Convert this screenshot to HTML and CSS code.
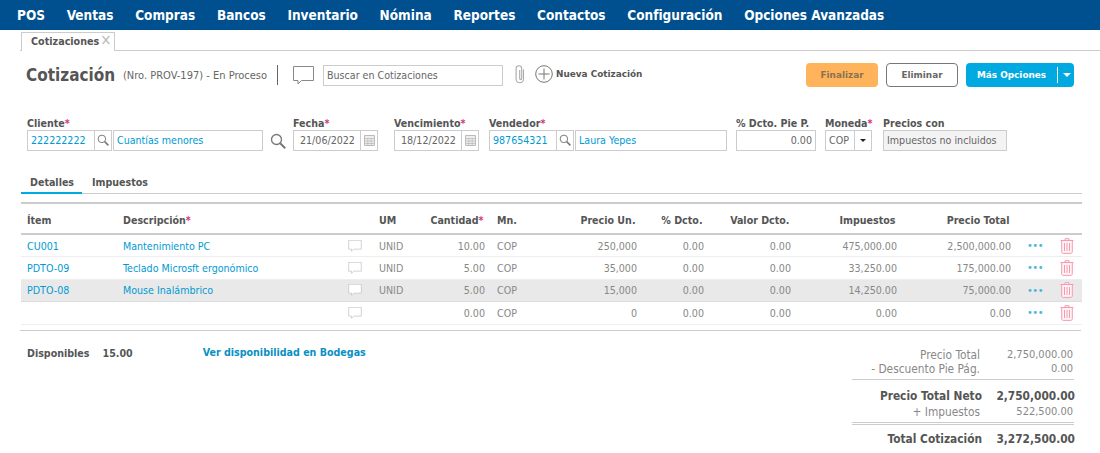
FILE: index.html
```html
<!DOCTYPE html>
<html lang="es">
<head>
<meta charset="utf-8">
<title>Cotización</title>
<link rel="stylesheet" href="styles.css">
</head>
<body>
<svg class="defs" width="0" height="0" aria-hidden="true">
  <symbol id="bubble" viewBox="0 0 21 19"><path d="M.5.5h20v14H8.500l-3.500 3.500v-3.500H.5z" fill="#fff" stroke="currentColor"/></symbol>
  <symbol id="lens" viewBox="0 0 16 16"><circle cx="6.500" cy="6.500" r="5" fill="none" stroke="currentColor" stroke-width="1.300"/><path d="M10.200 10.200l5 5" stroke="currentColor" stroke-width="2"/></symbol>
  <symbol id="cal" viewBox="0 0 11 11"><path d="M.5.5h10v10H.5z" fill="#eee" stroke="currentColor"/><path d="M.5 3.500h10M.5 6h10M.5 8.500h10M3.800 3.500v7M7.200 3.500v7" stroke="currentColor" stroke-width=".8"/></symbol>
  <symbol id="trash" viewBox="0 0 14 16"><path d="M5 2V.7h4V2M.5 2.500h13M1.700 3v10.800c0 .8.6 1.600 1.500 1.600h7.600c.9 0 1.500-.8 1.500-1.600V3M4.500 5v8M7 5v8M9.500 5v8" fill="#fff3f5" stroke="currentColor"/></symbol>
</svg>

<nav class="topnav">
  <a>POS</a><a>Ventas</a><a>Compras</a><a>Bancos</a><a>Inventario</a><a>Nómina</a><a>Reportes</a><a>Contactos</a><a>Configuración</a><a>Opciones Avanzadas</a>
</nav>

<div class="tabstrip">
  <div class="doc-tab">Cotizaciones<span class="close">×</span></div>
</div>

<header class="head">
  <h1>Cotización</h1>
  <span class="sub">(Nro. PROV-197) - En Proceso</span>
  <span class="vdiv"></span>
  <svg class="head-bubble"><use href="#bubble"/></svg>
  <div class="input search">Buscar en Cotizaciones</div>
  <svg class="clip" viewBox="0 0 12 19"><path d="M9.500 4.500v9.500a3.700 3.700 0 0 1-7.400 0V3.500a2.800 2.800 0 0 1 5.600 0v10a1 1 0 0 1-2 0V5" fill="none" stroke="#aaa" stroke-width="1.100"/></svg>
  <svg class="plus" viewBox="0 0 18 18"><circle cx="9" cy="9" r="8.300" fill="none" stroke="#777"/><path d="M9 3.500v11M3.500 9h11" stroke="#777"/></svg>
  <span class="new">Nueva Cotización</span>
  <div class="actions">
    <button class="btn orange">Finalizar</button>
    <button class="btn white">Eliminar</button>
    <button class="btn blue"><span>Más Opciones</span><i class="sep"></i><i class="caret"></i></button>
  </div>
</header>

<section class="form">
  <div class="field f-client">
    <label>Cliente<em>*</em></label>
    <div class="ctrls">
      <div class="input code link">222222222<span class="addon"><svg class="mini"><use href="#lens"/></svg></span></div>
      <div class="input name link">Cuantías menores</div>
      <svg class="big-lens"><use href="#lens"/></svg>
    </div>
  </div>
  <div class="field f-date">
    <label>Fecha<em>*</em></label>
    <div class="input date">21/06/2022<span class="addon"><svg class="calico"><use href="#cal"/></svg></span></div>
  </div>
  <div class="field f-date2">
    <label>Vencimiento<em>*</em></label>
    <div class="input date">18/12/2022<span class="addon"><svg class="calico"><use href="#cal"/></svg></span></div>
  </div>
  <div class="field f-seller">
    <label>Vendedor<em>*</em></label>
    <div class="ctrls">
      <div class="input code link">987654321<span class="addon"><svg class="mini"><use href="#lens"/></svg></span></div>
      <div class="input name2 link">Laura Yepes</div>
    </div>
  </div>
  <div class="field f-dcto">
    <label>% Dcto. Pie P.</label>
    <div class="input num">0.00</div>
  </div>
  <div class="field f-cur">
    <label>Moneda<em>*</em></label>
    <div class="input cur">COP<span class="addon"><i class="caret dark"></i></span></div>
  </div>
  <div class="field f-price">
    <label>Precios con</label>
    <div class="input ro">Impuestos no incluidos</div>
  </div>
</section>

<div class="subtabs">
  <a class="on">Detalles</a><a>Impuestos</a>
</div>

<table class="grid">
  <colgroup>
    <col class="c1"><col class="c2"><col class="c3"><col class="c4"><col class="c5"><col class="c6"><col class="c7"><col class="c8"><col class="c9"><col class="c10"><col class="c11"><col class="c12"><col class="c13">
  </colgroup>
  <thead>
    <tr>
      <th>Ítem</th><th>Descripción<em>*</em></th><th></th><th>UM</th><th class="r">Cantidad<em>*</em></th><th>Mn.</th><th class="r">Precio Un.</th><th class="r">% Dcto.</th><th class="r">Valor Dcto.</th><th class="r">Impuestos</th><th class="r">Precio Total</th><th></th><th></th>
    </tr>
  </thead>
  <tbody>
    <tr>
      <td class="link">CU001</td><td class="link">Mantenimiento PC</td><td class="ic"><svg class="row-bubble"><use href="#bubble"/></svg></td><td>UNID</td><td class="r">10.00</td><td>COP</td><td class="r">250,000</td><td class="r">0.00</td><td class="r">0.00</td><td class="r">475,000.00</td><td class="r">2,500,000.00</td><td class="dots">•••</td><td class="ic"><svg class="row-trash"><use href="#trash"/></svg></td>
    </tr>
    <tr>
      <td class="link">PDTO-09</td><td class="link">Teclado Microsft ergonómico</td><td class="ic"><svg class="row-bubble"><use href="#bubble"/></svg></td><td>UNID</td><td class="r">5.00</td><td>COP</td><td class="r">35,000</td><td class="r">0.00</td><td class="r">0.00</td><td class="r">33,250.00</td><td class="r">175,000.00</td><td class="dots">•••</td><td class="ic"><svg class="row-trash"><use href="#trash"/></svg></td>
    </tr>
    <tr class="sel">
      <td class="link">PDTO-08</td><td class="link">Mouse Inalámbrico</td><td class="ic"><svg class="row-bubble"><use href="#bubble"/></svg></td><td>UNID</td><td class="r">5.00</td><td>COP</td><td class="r">15,000</td><td class="r">0.00</td><td class="r">0.00</td><td class="r">14,250.00</td><td class="r">75,000.00</td><td class="dots">•••</td><td class="ic"><svg class="row-trash"><use href="#trash"/></svg></td>
    </tr>
    <tr>
      <td></td><td></td><td class="ic"><svg class="row-bubble"><use href="#bubble"/></svg></td><td></td><td class="r">0.00</td><td>COP</td><td class="r">0</td><td class="r">0.00</td><td class="r">0.00</td><td class="r">0.00</td><td class="r">0.00</td><td class="dots">•••</td><td class="ic"><svg class="row-trash"><use href="#trash"/></svg></td>
    </tr>
  </tbody>
</table>

<div class="rule"></div>

<section class="bottom">
  <div class="avail">
    <strong>Disponibles</strong><strong class="qty">15.00</strong>
    <a class="bodegas">Ver disponibilidad en Bodegas</a>
  </div>
  <div class="totals">
    <div class="t-row"><span>Precio Total</span><span>2,750,000.00</span></div>
    <div class="t-row t-under"><span>- Descuento Pie Pág.</span><span>0.00</span></div>
    <div class="t-row t-strong t-gap"><span>Precio Total Neto</span><span>2,750,000.00</span></div>
    <div class="t-row t-double"><span>+ Impuestos</span><span>522,500.00</span></div>
    <div class="t-row t-strong t-gap2"><span>Total Cotización</span><span>3,272,500.00</span></div>
  </div>
</section>
</body>
</html>
```

FILE: styles.css
```css
* { box-sizing: border-box; }
html, body { margin: 0; padding: 0; }
body {
  width: 1100px;
  height: 453px;
  overflow: hidden;
  background: #fff;
  color: #666;
  font-family: "DejaVu Sans Condensed", "DejaVu Sans", sans-serif;
  font-size: 10.600px;
}
.defs { position: absolute; }
em { color: #d6337c; font-style: normal; }

.topnav {
  height: 30px;
  background: #00508f;
  display: flex;
  align-items: center;
  gap: 21.700px;
  padding: 0 0 0 17px;
  color: #fff;
  font-weight: 700;
  font-size: 13.500px;
}

.tabstrip {
  height: 21px;
  margin-left: 20px;
  padding: 2px 0 0 1px;
  border-bottom: 1px solid #ccc;
}
.doc-tab {
  width: 94px;
  height: 19px;
  border: 1px solid #ccc;
  border-bottom: 0;
  background: #fff;
  padding-left: 9px;
  font-weight: 700;
  font-size: 10.700px;
  line-height: 17px;
  color: #555;
  white-space: nowrap;
}
.close { color: #bbb; font-weight: 400; font-size: 15px; line-height: 0; margin-left: 1px; }

.head {
  height: 36px;
  margin-top: 6px;
  padding-left: 26px;
  display: flex;
  align-items: center;
}
.head h1 {
  margin: 0;
  font-size: 17px;
  font-weight: 700;
  color: #555;
  width: 98px;
  white-space: nowrap;
}
.sub { width: 153px; font-size: 11px; white-space: nowrap; margin-left: -1px; margin-right: 1px; }
.vdiv { width: 1px; height: 20px; background: #666; margin-right: 15px; }
.head-bubble { width: 21px; height: 19px; color: #888; margin-right: 9px; }
.search { width: 180px; height: 21px; }
.clip { width: 12px; height: 19px; margin: -2px 9px 0 11px; }
.plus { width: 18px; height: 18px; margin-right: 3px; margin-top: -2px; }
.new {
  font-family: "DejaVu Sans", sans-serif;
  font-weight: 700;
  font-size: 8.900px;
  color: #555;
  white-space: nowrap;
  margin-top: -3px;
}
.actions { margin-left: auto; margin-right: 26px; display: flex; gap: 8px; }
.btn {
  width: 72px;
  height: 24px;
  border-radius: 4px;
  border: 0;
  font-family: "DejaVu Sans", sans-serif;
  font-weight: 700;
  font-size: 8.900px;
  padding: 0;
  white-space: nowrap;
}
.orange { background: #ffb35a; color: #8a7152; }
.white { background: #fff; border: 1px solid #777; color: #666; }
.blue {
  width: 108px;
  background: #00a9e0;
  color: #fff;
  display: flex;
  align-items: center;
  padding-left: 11px;
}
.sep { width: 1px; height: 16px; background: #fff; margin: 0 5px 0 11px; }
.caret { width: 0; height: 0; border: 4px solid transparent; border-top-color: #fff; border-bottom: 0; }
.caret.dark { border-top-color: #222; border-width: 3.500px; border-bottom: 0; }

.form {
  margin-top: 23px;
  padding-left: 27px;
  display: flex;
  height: 35px;
}
.field { display: flex; flex-direction: column; }
.field label {
  height: 14px;
  line-height: 14px;
  font-weight: 700;
  font-size: 10.600px;
  color: #555;
  white-space: nowrap;
}
.ctrls { display: flex; gap: 1px; align-items: center; }
.f-client { width: 266px; }
.f-date { width: 101px; }
.f-date2 { width: 95px; }
.f-seller { width: 247px; }
.f-dcto { width: 89px; }
.f-cur { width: 58px; }
.input {
  height: 21px;
  border: 1px solid #ccc;
  background: #fff;
  padding: 0 3px;
  line-height: 19px;
  font-size: 10.600px;
  color: #666;
  white-space: nowrap;
  position: relative;
}
.input.link { color: #009ad3; }
.code { width: 85px; }
.name { width: 150px; }
.name2 { width: 152px; }
.big-lens { width: 16px; height: 16px; color: #777; margin-left: 6px; }
.addon {
  position: absolute;
  right: 0;
  top: 0;
  height: 19px;
  width: 17px;
  border-left: 1px solid #ccc;
  display: flex;
  align-items: center;
  justify-content: center;
}
.mini { width: 12px; height: 12px; color: #777; margin-top: -2px; }
.calico { width: 11px; height: 11px; color: #bbb; }
.date { width: 85px; padding-left: 6px; }
.num { width: 80px; text-align: right; padding-right: 3px; }
.cur { width: 47px; }
.ro { width: 124px; background: #f3f3f3; }

.subtabs {
  margin: 24px 18px 0 21px;
  height: 19px;
  border-bottom: 1px solid #ccc;
  display: flex;
  font-weight: 700;
  font-size: 10.600px;
  color: #555;
}
.subtabs a {
  height: 19px;
  line-height: 14px;
  padding: 0 9px;
  margin-right: 1px;
}
.subtabs a.on { border-bottom: 2px solid #00a9e0; width: 61px; margin-right: 1px; }

.grid {
  margin: 8px 0 0 21px;
  width: 1061px;
  table-layout: fixed;
  border-collapse: collapse;
  border-top: 2px solid #ccc;
}
.c1 { width: 96px; } .c2 { width: 221px; } .c3 { width: 35px; } .c4 { width: 42px; }
.c5 { width: 76px; } .c6 { width: 41px; } .c7 { width: 111px; } .c8 { width: 67px; }
.c9 { width: 87px; } .c10 { width: 106px; } .c11 { width: 114px; } .c12 { width: 38px; } .c13 { width: 27px; }
.grid th {
  height: 31px;
  padding: 3px 6px 0;
  text-align: left;
  font-weight: 700;
  font-size: 10.600px;
  color: #555;
  border-bottom: 2px solid #ccc;
  white-space: nowrap;
}
.grid th.r { padding-right: 7.500px; }
.grid td {
  height: 22.500px;
  padding: 0 6px;
  border-bottom: 1px solid #eee;
  color: #888;
  white-space: nowrap;
}
.grid .r { text-align: right; }
.grid td.link { color: #009ad3; }
.sel td { background: #e9e9e9; border-bottom-color: #ddd; }
.grid td.ic { padding: 0; text-align: center; line-height: 0; }
.row-bubble { width: 14px; height: 12px; color: #bbb; margin-right: 2px; }
.row-trash { width: 14px; height: 16px; color: #f59ab0; margin-right: 4px; }
.grid td.dots { padding: 0 2px 0 0; text-align: center; color: #4db8dc; font-size: 11px; letter-spacing: -.5px; }

.rule { margin: 5px 19px 0 20px; height: 1px; background: #ccc; }

.bottom { display: flex; justify-content: space-between; }
.avail { padding: 16px 0 0 27px; display: flex; align-items: flex-start; font-size: 10.600px; color: #555; }
.qty { margin-left: 13px; }
.bodegas { margin-left: 70px; color: #0a8fc4; font-weight: 700; margin-top: -1px; }

.totals { width: 222px; margin: 17px 26px 0 0; font-size: 11.800px; }
.t-row { display: flex; justify-content: flex-end; height: 14px; line-height: 14px; color: #888; white-space: nowrap; padding-right: 1px; }
.t-row span:last-child { width: 93px; text-align: right; font-size: 11px; }
.t-under { height: 18px; border-bottom: 1px solid #ccc; padding-bottom: 4px; }
.t-strong { color: #555; font-weight: 700; }
.t-strong span:last-child { margin-right: -2px; font-size: 11.800px; }
.t-gap { margin-top: 9px; }
.t-double { height: 20px; border-bottom: 3px double #ccc; padding-bottom: 3px; margin-top: 2px; }
.t-gap2 { margin-top: 7px; }
```
